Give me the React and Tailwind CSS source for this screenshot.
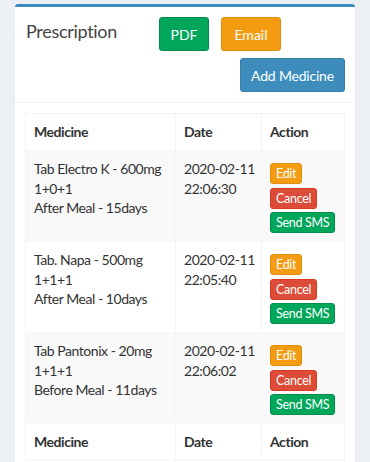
import React from "react";

const rows = [
  {
    name: "Tab Electro K - 600mg",
    dose: "1+0+1",
    note: "After Meal - 15days",
    date: "2020-02-11",
    time: "22:06:30",
  },
  {
    name: "Tab. Napa - 500mg",
    dose: "1+1+1",
    note: "After Meal - 10days",
    date: "2020-02-11",
    time: "22:05:40",
  },
  {
    name: "Tab Pantonix - 20mg",
    dose: "1+1+1",
    note: "Before Meal - 11days",
    date: "2020-02-11",
    time: "22:06:02",
  },
];

const HeadRow = () => (
  <tr className="bg-white font-bold text-[#333]">
    <th className="border border-[#f4f4f4] px-2 py-2 text-left leading-5 w-[150px]">Medicine</th>
    <th className="border border-[#f4f4f4] px-2 py-2 text-left leading-5 w-[86px]">Date</th>
    <th className="border border-[#f4f4f4] px-2 py-2 text-left leading-5">Action</th>
  </tr>
);

const XsBtn = ({ className, children }) => (
  <button className={`h-[21px] px-[5px] rounded-[3px] border text-[12.5px] tracking-[-0.3px] leading-[17px] text-white whitespace-nowrap ${className}`}>
    {children}
  </button>
);

export default function App() {
  return (
    <div className="min-h-[462px] bg-[#ecf0f5] pt-[4px] font-['Lato',sans-serif] text-[14px] text-[#333]">
      <div className="ml-[15px] w-[340px] bg-white border-t-[3px] border-[#3c8dbc] rounded-t-[3px] shadow-[0_1px_1px_rgba(0,0,0,0.1)]">
        {/* header */}
        <div className="p-[10px] border-b border-[#f4f4f4]">
          <div className="flex items-start">
            <h3 className="w-[134px] pl-[1px] pt-[2px] text-[18px] tracking-[-0.3px] leading-[24px] text-[#444]">Prescription</h3>
            <button className="h-[34px] w-[50px] rounded-[3px] border border-[#008d4c] bg-[#00a65a] text-white">PDF</button>
            <button className="ml-[12px] h-[34px] w-[60px] rounded-[3px] border border-[#e08e0b] bg-[#f39c12] text-white">Email</button>
          </div>
          <div className="mt-[7px] flex justify-end">
            <button className="h-[34px] w-[105px] rounded-[3px] border border-[#367fa9] bg-[#3c8dbc] text-white tracking-[-0.2px]">Add Medicine</button>
          </div>
        </div>
        {/* body */}
        <div className="p-[10px]">
          <table className="w-[320px] table-fixed border-collapse border border-[#f4f4f4] tracking-[-0.45px]">
            <thead>
              <HeadRow />
            </thead>
            <tbody>
              {rows.map((r, i) => (
                <tr key={i} className={i % 2 === 0 ? "bg-[#f9f9f9]" : "bg-white"}>
                  <td className="border border-[#f4f4f4] px-2 py-2 align-top leading-[19.5px] whitespace-nowrap">
                    <div>{r.name}</div>
                    <div>{r.dose}</div>
                    <div>{r.note}</div>
                  </td>
                  <td className="border border-[#f4f4f4] px-2 py-2 align-top leading-[19.5px] whitespace-nowrap">
                    <div>{r.date}</div>
                    <div>{r.time}</div>
                  </td>
                  <td className="border border-[#f4f4f4] px-2 pt-[12px] pb-[8px] align-top">
                    <div className="flex flex-col items-start gap-[3.5px]">
                      <XsBtn className="border-[#e08e0b] bg-[#f39c12]">Edit</XsBtn>
                      <XsBtn className="border-[#d73925] bg-[#dd4b39]">Cancel</XsBtn>
                      <XsBtn className="border-[#008d4c] bg-[#00a65a]">Send SMS</XsBtn>
                    </div>
                  </td>
                </tr>
              ))}
            </tbody>
            <tfoot>
              <HeadRow />
            </tfoot>
          </table>
        </div>
      </div>
    </div>
  );
}
